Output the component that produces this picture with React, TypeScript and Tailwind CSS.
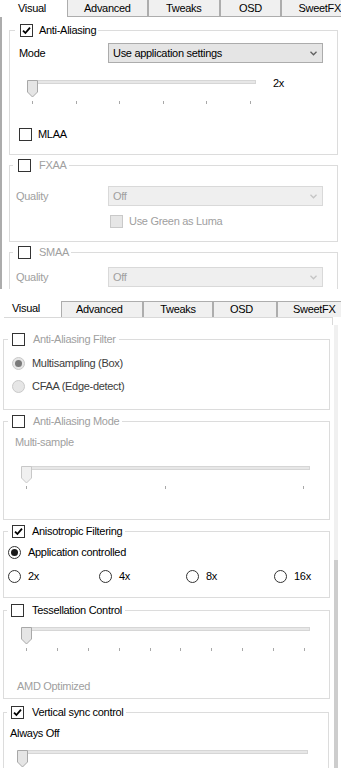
import React from "react";

const gray = "text-[#a0a0a0]";

function Check({ checked = false, disabled = false }: { checked?: boolean; disabled?: boolean }) {
  return (
    <span
      className={`flex h-[13px] w-[13px] shrink-0 items-center justify-center border ${
        disabled ? "border-[#c9c9c9] bg-[#e6e6e6]" : "border-[#333333] bg-white"
      }`}
    >
      {checked && (
        <svg width="9" height="9" viewBox="0 0 9 9">
          <path d="M1 4.6 L3.4 7 L8 1.6" fill="none" stroke="#000" strokeWidth="1.8" />
        </svg>
      )}
    </span>
  );
}

function Radio({ checked = false, disabled = false }: { checked?: boolean; disabled?: boolean }) {
  return (
    <span
      className={`flex h-[13px] w-[13px] shrink-0 items-center justify-center rounded-full border ${
        disabled ? "border-[#c9c9c9] bg-[#e6e6e6]" : "border-[#333333] bg-white"
      }`}
    >
      {checked && (
        <span className={`h-[7px] w-[7px] rounded-full ${disabled ? "bg-[#7a7a7a]" : "bg-[#1a1a1a]"}`} />
      )}
    </span>
  );
}

function Combo({ text, disabled = false }: { text: string; disabled?: boolean }) {
  return (
    <div
      className={`flex h-[20px] w-[215px] shrink-0 items-center justify-between border pl-[4px] pr-[5px] ${
        disabled ? "border-[#d9d9d9] bg-[#efefef] text-[#a0a0a0]" : "border-[#acacac] bg-[#e5e5e5] text-black"
      }`}
    >
      <span>{text}</span>
      <svg width="7" height="5" viewBox="0 0 7 5">
        <path
          d="M0.5 0.8 L3.5 3.8 L6.5 0.8"
          fill="none"
          stroke={disabled ? "#c4c4c4" : "#606060"}
          strokeWidth="1.3"
        />
      </svg>
    </div>
  );
}

function Slider({
  width,
  ticks,
  tickSpan,
  tickGap,
  disabled = false,
}: {
  width: number;
  ticks: number;
  tickSpan: number;
  tickGap: number;
  disabled?: boolean;
}) {
  return (
    <div style={{ width }}>
      <div className="relative h-[18px]">
        <div className="ml-[1px] mt-[6px] h-[4px] border border-[#d6d6d6] bg-[#e7e7e7]" />
        <svg className="absolute left-0 top-0" width="11" height="18" viewBox="0 0 11 18">
          <path
            d="M0.5 0.5 H10.5 V12 L5.5 17 L0.5 12 Z"
            fill={disabled ? "#f0f0f0" : "#e5e5e5"}
            stroke={disabled ? "#c8c8c8" : "#a8a8a8"}
          />
        </svg>
      </div>
      {ticks > 0 && (
        <div className="ml-[5px] flex justify-between" style={{ width: tickSpan, marginTop: tickGap }}>
          {Array.from({ length: ticks }).map((_, i) => (
            <span key={i} className="h-[3px] w-px bg-[#a8a8a8]" />
          ))}
        </div>
      )}
    </div>
  );
}

function Group({
  label,
  checked = false,
  dim = false,
  legendClass,
  gapClass,
  className,
  children,
}: {
  label: string;
  checked?: boolean;
  dim?: boolean;
  legendClass: string;
  gapClass: string;
  className: string;
  children?: React.ReactNode;
}) {
  return (
    <fieldset className={`border border-[#dcdcdc] ${className}`}>
      <legend className={legendClass}>
        <span className={`flex h-[13px] items-center ${gapClass}`}>
          <Check checked={checked} />
          <span className={`leading-[13px] ${dim ? gray : "text-black"}`}>{label}</span>
        </span>
      </legend>
      {children}
    </fieldset>
  );
}

function TopPanel() {
  return (
    <div className="h-[289px] overflow-hidden">
      <div className="flex h-[17px] leading-[15px]">
        <div className="w-[67px] pl-[18px] pt-[1px]">Visual</div>
        <div className="flex w-[81px] items-center justify-center border-x border-b border-[#adadad] bg-[#f0f0f0]">Advanced</div>
        <div className="flex w-[72px] items-center justify-center border-x border-b border-[#adadad] bg-[#f0f0f0]">Tweaks</div>
        <div className="flex w-[62px] items-center justify-center border-x border-b border-[#adadad] bg-[#f0f0f0]">OSD</div>
        <div className="flex flex-1 items-center whitespace-nowrap border-l border-b border-[#adadad] bg-[#f0f0f0] pl-[16px]">SweetFX</div>
      </div>
      <div className="h-[272px] border-l-2 border-[#acacac] pt-[7px]">
        <Group label="Anti-Aliasing" checked legendClass="ml-[5px] pl-[5px] pr-[2px]" gapClass="gap-[6px]" className="ml-[7px] mr-[3px]">
          <div className="pb-[13px] pl-[9px]">
            <div className="mt-[6px] flex items-center">
              <span className="w-[89px]">Mode</span>
              <Combo text="Use application settings" />
            </div>
            <div className="mt-[11px] flex">
              <div className="ml-[8px]">
                <Slider width={229} ticks={6} tickSpan={219} tickGap={3} />
              </div>
              <span className="ml-[17px] h-[18px] leading-[18px]">2x</span>
            </div>
            <div className="mt-[24px] flex items-center gap-[6px]">
              <Check />
              <span className="leading-[13px]">MLAA</span>
            </div>
          </div>
        </Group>
        <Group label="FXAA" dim legendClass="ml-[3px] pl-[5px] pr-[2px]" gapClass="gap-[8px]" className="ml-[7px] mr-[3px] mt-[4px]">
          <div className="pb-[13px] pl-[6px]">
            <div className="mt-[14px] flex items-center">
              <span className={`w-[92px] ${gray}`}>Quality</span>
              <Combo text="Off" disabled />
            </div>
            <div className="ml-[94px] mt-[9px] flex items-center gap-[6px]">
              <Check disabled />
              <span className={`leading-[13px] ${gray}`}>Use Green as Luma</span>
            </div>
          </div>
        </Group>
        <Group label="SMAA" dim legendClass="ml-[3px] pl-[5px] pr-[2px]" gapClass="gap-[8px]" className="ml-[7px] mr-[3px] mt-[4px]">
          <div className="pb-[13px] pl-[6px]">
            <div className="mt-[8px] flex items-center">
              <span className={`w-[92px] ${gray}`}>Quality</span>
              <Combo text="Off" disabled />
            </div>
          </div>
        </Group>
      </div>
    </div>
  );
}

function RadioItem({ label, checked = false, disabled = false, className = "" }: { label: string; checked?: boolean; disabled?: boolean; className?: string }) {
  return (
    <div className={`flex items-center gap-[7px] ${className}`}>
      <Radio checked={checked} disabled={disabled} />
      <span className={`leading-[13px] ${disabled ? "text-[#3c3c3c]" : "text-black"}`}>{label}</span>
    </div>
  );
}

function BottomPanel() {
  return (
    <div className="h-[479px] overflow-hidden">
      <div className="mt-[12px] flex h-[16px] leading-[13px]">
        <div className="w-[61px] pl-[12px] pt-[1px]">Visual</div>
        <div className="flex w-[82px] items-center border-x border-t border-[#adadad] bg-[#f0f0f0] pl-[14px]">Advanced</div>
        <div className="flex w-[70px] items-center justify-center border-x border-t border-[#adadad] bg-[#f0f0f0]">Tweaks</div>
        <div className="flex w-[64px] items-center border-x border-t border-[#adadad] bg-[#f0f0f0] pl-[16px]">OSD</div>
        <div className="flex flex-1 items-center whitespace-nowrap border-l border-t border-[#adadad] bg-[#f0f0f0] pl-[15px]">SweetFX</div>
      </div>
      <div className="ml-[4px] mr-[8px] h-[8px] border-r border-t border-[#d9d9d9]" />
      <div className="flex h-[443px]">
        <div className="w-[333px]">
          <Group label="Anti-Aliasing Filter" dim legendClass="ml-[4px] pl-[4px] pr-[3px]" gapClass="gap-[8px]" className="ml-[3px] mt-[8px] w-[327px]">
            <div className="pb-[16px] pl-[8px]">
              <RadioItem label="Multisampling (Box)" checked disabled className="mt-[11px] gap-[6px]" />
              <RadioItem label="CFAA (Edge-detect)" disabled className="mt-[10px] gap-[6px]" />
            </div>
          </Group>
          <Group label="Anti-Aliasing Mode" dim legendClass="ml-[4px] pl-[4px] pr-[3px]" gapClass="gap-[8px]" className="ml-[3px] mt-[5px] w-[327px]">
            <div className="pb-[30px] pl-[11px]">
              <div className={`mt-[8px] leading-[13px] ${gray}`}>Multi-sample</div>
              <div className="ml-[6px] mt-[17px]">
                <Slider width={289} ticks={3} tickSpan={278} tickGap={2} disabled />
              </div>
            </div>
          </Group>
          <Group label="Anisotropic Filtering" checked legendClass="ml-[4px] pl-[4px] pr-[3px]" gapClass="gap-[7px]" className="ml-[3px] mt-[5px] w-[327px]">
            <div className="pb-[14px] pl-[4px]">
              <RadioItem label="Application controlled" checked className="mt-[8px]" />
              <div className="mt-[11px] flex">
                <RadioItem label="2x" className="w-[91px]" />
                <RadioItem label="4x" className="w-[87px]" />
                <RadioItem label="8x" className="w-[88px]" />
                <RadioItem label="16x" />
              </div>
            </div>
          </Group>
          <Group label="Tessellation Control" legendClass="ml-[3px] pl-[4px] pr-[3px]" gapClass="gap-[8px]" className="ml-[3px] mt-[6px] w-[327px]">
            <div className="pb-[5px] pl-[13px]">
              <div className="ml-[4px] mt-[10px]">
                <Slider width={289} ticks={10} tickSpan={279} tickGap={3} />
              </div>
              <div className={`mt-[29px] leading-[13px] ${gray}`}>AMD Optimized</div>
            </div>
          </Group>
          <Group label="Vertical sync control" checked legendClass="ml-[3px] pl-[4px] pr-[2px]" gapClass="gap-[8px]" className="ml-[3px] mt-[7px] w-[326px]">
            <div className="pb-[20px] pl-[6px]">
              <div className="mt-[8px] leading-[13px]">Always Off</div>
              <div className="ml-[7px] mt-[10px]">
                <Slider width={291} ticks={0} tickSpan={0} tickGap={0} />
              </div>
            </div>
          </Group>
        </div>
        <div className="flex w-[8px] flex-col pl-[1px] pr-[3px]">
          <div className="h-[235px] bg-[#f0f0f0]" />
          <div className="flex-1 bg-[#cdcdcd]" />
        </div>
      </div>
    </div>
  );
}

export default function App() {
  return (
    <div className="h-[768px] w-[341px] overflow-hidden bg-white font-['Liberation_Sans',Arial,sans-serif] text-[11px] tracking-[-0.3px] text-black">
      <TopPanel />
      <BottomPanel />
    </div>
  );
}
